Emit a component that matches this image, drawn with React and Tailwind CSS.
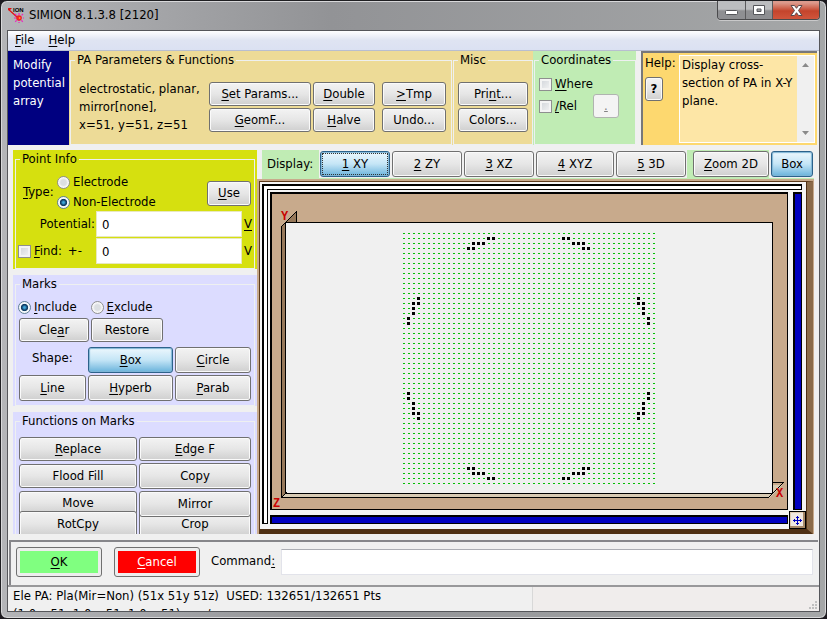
import React from "react";

/* Renders a label in which the character after "_" is the underlined access key. */
function Accel({ text }) {
  const i = text.indexOf("_");
  if (i < 0) return <>{text}</>;
  return (
    <>
      {text.slice(0, i)}
      <span className="underline underline-offset-2">{text[i + 1]}</span>
      {text.slice(i + 2)}
    </>
  );
}

function Btn({ label, className = "h-6", active = false, focus = false }) {
  const look = active
    ? "border-[#2c628b] bg-linear-to-b from-[#e5f4fc] from-10% via-[#c4e5f6] via-50% to-[#68b3db] shadow-[inset_0_0_1px_1px_#7fb5d5]"
    : "border-[#707070] bg-linear-to-b from-[#f3f3f3] via-[#e6e6e6] to-[#cfcfcf] shadow-[inset_0_0_0_1px_#fafafa]";
  return (
    <button
      type="button"
      className={`relative flex shrink-0 items-center justify-center whitespace-nowrap rounded-[3px] border leading-4 ${look} ${className}`}
    >
      {focus && <span className="absolute inset-px border border-dotted border-[#333]" />}
      <span>
        <Accel text={label} />
      </span>
    </button>
  );
}

function Group({ title, className = "", children }) {
  return (
    <fieldset className={`min-w-0 border border-[#eef0f0] px-px ${className}`}>
      <legend className="ml-[3px] px-[2px] leading-[18px]">{title}</legend>
      {children}
    </fieldset>
  );
}

function Check({ id, label }) {
  return (
    <div className="flex items-center gap-[3px]">
      <input
        id={id}
        type="checkbox"
        className="size-[13px] shrink-0 appearance-none border border-[#8e8f8f] bg-linear-to-br from-[#cfd3d8] to-[#f6f6f6] shadow-[inset_0_0_0_2px_#f4f4f4]"
      />
      <label htmlFor={id} className="leading-[18px]">
        <Accel text={label} />
      </label>
    </div>
  );
}

function Radio({ id, name, label, checked = false }) {
  return (
    <div className="flex items-center gap-[3px]">
      <input
        id={id}
        name={name}
        type="radio"
        defaultChecked={checked}
        className="size-[13px] shrink-0 appearance-none rounded-full border border-[#8e8f8f] bg-[radial-gradient(circle,#dcdfe2_0_35%,#f8f8f8_60%)] checked:border-[#5f7f95] checked:bg-[radial-gradient(circle_at_50%_50%,#3fa9dc_0_10%,#123f66_34%,#123f66_42%,#f4f8fa_52%)]"
      />
      <label htmlFor={id} className="leading-[18px]">
        <Accel text={label} />
      </label>
    </div>
  );
}

function TitleBar() {
  return (
    <header className="flex h-[29px] items-start justify-between">
      <div className="flex items-center gap-[5px] pl-px pt-[5px]">
        <svg width="16" height="18" viewBox="0 0 16 18" aria-hidden="true">
          <path d="M0 3 L9 11" stroke="#e01010" strokeWidth="1.3" />
          <path d="M0 2h4l-3 3z" fill="#e01010" />
          <text x="5" y="6" fontSize="6" fontWeight="bold" fontFamily="Liberation Sans, sans-serif">ION</text>
          <g stroke="#f020c0" strokeWidth="1.2">
            <path d="M11 7v10M6 12h10M7 8l8 8M15 8l-8 8" strokeDasharray="2 1" />
          </g>
          <circle cx="11" cy="12" r="2.8" fill="#f02020" />
          <circle cx="11.6" cy="12" r="1" fill="#ff9a20" />
        </svg>
        <h1 className="text-[13px] leading-[18px] text-black">SIMION 8.1.3.8 [2120]</h1>
      </div>
      <div className="flex h-[19px] overflow-hidden rounded-b-[4px] border border-t-0 border-[#4a4a4c] text-white shadow-[0_1px_0_#c9c9ca]">
        <button type="button" aria-label="Minimize" className="flex w-7 items-center justify-center border-r border-[#5a5a5c] bg-linear-to-b from-[#bcbdbf] from-45% to-[#8e8f92] to-55% pt-1">
          <svg width="13" height="5"><rect x=".5" y=".5" width="12" height="4" rx="1" fill="#fff" stroke="#55565a" /></svg>
        </button>
        <button type="button" aria-label="Maximize" className="flex w-[27px] items-center justify-center border-r border-[#5a5a5c] bg-linear-to-b from-[#bcbdbf] from-45% to-[#8e8f92] to-55%">
          <svg width="12" height="10"><path d="M.5 .5h11v9h-11zM4 4v2.500h4v-2.500z" fill="#fff" fillRule="evenodd" stroke="#55565a" /></svg>
        </button>
        <button type="button" aria-label="Close" className="flex w-[46px] items-center justify-center bg-linear-to-b from-[#dc9a8c] from-10% via-[#c4442c] via-55% to-[#d0553c]">
          <svg width="13" height="11"><path d="M1 .5h3.500l2 2.800 2-2.800H12L8.500 5.500 12 10.500H8.500l-2-2.800-2 2.800H1l3.500-5z" fill="#fff" stroke="#5a4a4c" /></svg>
        </button>
      </div>
    </header>
  );
}

function Toolbar() {
  return (
    <section className="flex h-[94px]">
      <div className="w-[61px] shrink-0 bg-[#000080] pl-[5px] pt-[5px] leading-[18px] text-white">Modify potential array</div>
      <div className="flex shrink-0 gap-px bg-[#eddb97] pl-px">
        <Group title="PA Parameters & Functions" className="w-[382px]">
          <div className="flex pl-[7px] pt-[11px]">
            <p className="w-[130px] whitespace-nowrap leading-[18px]">
              electrostatic, planar,
              <br />
              mirror[none],
              <br />
              x=51, y=51, z=51
            </p>
            <div className="grid grid-cols-[102px_62px_69px] content-start gap-x-[2px] gap-y-[2px] pt-[2px]">
              <Btn label="_Set Params..." />
              <Btn label="_Double" />
              <Btn label="_>Tmp" className="ml-[5px] h-6" />
              <Btn label="_GeomF..." />
              <Btn label="_Halve" />
              <Btn label="Undo..." className="ml-[5px] h-6" />
            </div>
          </div>
        </Group>
        <Group title="Misc" className="w-[80px]">
          <div className="flex flex-col gap-[2px] px-[3px] pt-[13px]">
            <Btn label="Pri_nt..." />
            <Btn label="Colors..." />
          </div>
        </Group>
      </div>
      <div className="w-[103px] shrink-0 bg-[#c0ecb4] pl-px">
        <Group title="Coordinates" className="h-full">
          <div className="flex flex-col gap-px pl-[3px] pt-[6px]">
            <Check id="where" label="_Where" />
            <div className="flex items-center gap-4">
              <Check id="rel" label="_/Rel" />
              <button type="button" className="h-6 w-[26px] rounded-[3px] border border-[#b0b4b0] bg-[#f4f4f4] leading-4 text-[#838383] underline">.</button>
            </div>
          </div>
        </Group>
      </div>
      <div className="ml-[5px] mr-[2px] flex min-w-0 flex-1 border-l-2 border-t-2 border-[#77777a] bg-[#fdd86f] pl-[2px]">
        <div className="w-[34px] shrink-0 pt-px">
          <label htmlFor="help" className="whitespace-nowrap leading-[18px]">Help:</label>
          <Btn label="?" className="mt-[5px] h-6 w-[18px] font-bold" />
        </div>
        <div className="my-[2px] mr-[2px] flex min-w-0 flex-1 border border-white bg-[#fde6a6]">
          <textarea id="help" readOnly defaultValue="Display cross-section of PA in X-Y plane." className="min-w-0 flex-1 resize-none overflow-hidden pl-[2px] leading-[18px] outline-none" />
          <div className="flex w-[17px] shrink-0 flex-col items-center justify-between bg-[#f0f0f0] py-[7px]">
            <svg width="7" height="4"><path d="M0 4 3.500 0 7 4z" fill="#8a8a8a" /></svg>
            <svg width="7" height="4"><path d="M0 0 3.500 4 7 0z" fill="#8a8a8a" /></svg>
          </div>
        </div>
      </div>
    </section>
  );
}

function PointInfo() {
  return (
    <section className="bg-[#d6e00f] px-[2px]">
      <Group title="Point Info" className="h-[119px]">
        <div className="flex items-center pl-[6px] pt-[5px]">
          <span className="w-[34px] leading-[18px]"><Accel text="_Type:" /></span>
          <div className="flex flex-1 flex-col gap-[2px]">
            <Radio id="electrode" name="ptype" label="Electrode" />
            <Radio id="nonelectrode" name="ptype" label="Non-Electrode" checked />
          </div>
          <Btn label="_Use" className="mr-[2px] mt-[2px] h-[25px] w-11" />
        </div>
        <div className="grid grid-cols-[79px_146px_1fr] items-center gap-y-px">
          <label htmlFor="potential" className="pr-px text-right leading-[18px]">Potential:</label>
          <input id="potential" defaultValue="0" className="h-[26px] min-w-0 border border-[#e8e8c0] bg-white px-[5px]" />
          <span className="pl-[2px] underline underline-offset-2">V</span>
          <div className="flex gap-[6px] pl-px">
            <Check id="find" label="_Find:" />
            <label htmlFor="tolerance">+-</label>
          </div>
          <input id="tolerance" defaultValue="0" className="h-[26px] min-w-0 border border-[#e8e8c0] bg-white px-[5px]" />
          <span className="pl-[2px]">V</span>
        </div>
      </Group>
    </section>
  );
}

function Marks() {
  return (
    <section className="bg-[#dcdcff] px-[2px]">
      <Group title="Marks" className="h-[131px]">
        <div className="flex gap-[14px] pl-px pt-[5px]">
          <Radio id="include" name="marks" label="_Include" checked />
          <Radio id="exclude" name="marks" label="_Exclude" />
        </div>
        <div className="flex gap-[2px] pl-[2px] pt-[2px]">
          <Btn label="Cle_ar" className="h-6 w-[70px]" />
          <Btn label="Restore" className="h-6 w-[72px]" />
        </div>
        <div className="grid grid-cols-[67px_85px_76px] gap-[2px] pl-[2px] pt-[5px]">
          <span className="pl-[13px] leading-[22px]">Shape:</span>
          <Btn label="_Box" className="h-[26px]" active />
          <Btn label="_Circle" className="h-[26px]" />
          <Btn label="_Line" className="h-[26px]" />
          <Btn label="_Hyperb" className="h-[26px]" />
          <Btn label="_Parab" className="h-[26px]" />
        </div>
      </Group>
    </section>
  );
}

function MarkFunctions() {
  return (
    <section className="h-[122px] overflow-hidden bg-[#dcdcff] px-[2px]">
      <Group title="Functions on Marks" className="h-[140px]">
        <div className="grid grid-cols-[118px_112px] gap-[2px] pl-[2px] pt-[7px]">
          <div className="flex flex-col gap-[3px]">
            <Btn label="_Replace" />
            <Btn label="Flood Fill" />
            <Btn label="Move" />
            <Btn label="RotCpy" className="-mt-[7px] h-[26px]" />
          </div>
          <div className="flex flex-col gap-[2px]">
            <Btn label="_Edge F" />
            <Btn label="Copy" className="h-[26px]" />
            <Btn label="Mirror" className="z-10 h-[26px]" />
            <Btn label="Crop" className="-mt-[8px] h-[26px]" />
          </div>
        </div>
      </Group>
    </section>
  );
}

function DisplayBar() {
  return (
    <div className="ml-[5px] flex h-[29px] shrink-0 border-b border-[#c0ecb4]">
      <span className="w-[57px] shrink-0 bg-[#c0ecb4] pl-[5px] leading-7">Display:</span>
      <div className="flex min-w-0 flex-1 gap-[2px] pl-px pt-px">
        <Btn label="_1 XY" className="h-[26px] w-[70px]" active focus />
        <Btn label="_2 ZY" className="h-[26px] w-[70px]" />
        <Btn label="_3 XZ" className="h-[26px] w-[70px]" />
        <Btn label="_4 XYZ" className="h-[26px] w-[78px]" />
        <Btn label="_5 3D" className="h-[26px] w-[70px]" />
      </div>
      <div className="flex shrink-0 bg-[#c0ecb4] pl-[6px] pt-px">
        <Btn label="_Zoom 2D" className="h-[26px] w-[76px]" />
      </div>
      <div className="pl-[2px] pr-px pt-px">
        <Btn label="Box" className="h-[26px] w-[42px]" active />
      </div>
    </div>
  );
}

/* One octant of electrode points on the 51 x 51 array; the rest follows by mirroring. */
const TOP = [[13, 3], [14, 3], [14, 2], [15, 2], [16, 2], [17, 1], [18, 1]];
const SIDE = [[3, 13], [3, 14], [2, 14], [2, 15], [2, 16], [1, 17], [1, 18]];
const POINTS = [...TOP, ...SIDE].flatMap(([i, j]) => [[i, j], [50 - i, j], [i, 50 - j], [50 - i, 50 - j]]);
const ROWS = Array.from({ length: 51 }, (_, r) => r);

function Plot() {
  return (
    <svg viewBox="272 194 515 315" className="block h-full w-full bg-[#c8aa8c]" role="img" aria-label="XY cross-section of the potential array">
      <g shapeRendering="crispEdges">
        <path d="M281 226 296 211V223H286V494L281 498Z" fill="#96785a" />
        <path d="M286 494H773V485H783L769 498H281Z" fill="#d8cbb4" />
        <rect x="286" y="223" width="486" height="270" fill="#f0f0f0" />
        <path d="M285.500 222.500H772.500V493.500H285.500ZM281.500 226V497.500H768.500M296.500 211V222M772 482.500H783" fill="none" stroke="#000" />
        <path d="M281.500 226.500 296.500 211.500M281.500 497.500 286.500 492.500M768.500 497.500 783.500 482.500" stroke="#000" />
        {ROWS.map((r) => (
          <path key={r} d={`M403 ${233.5 + 5 * r}H655`} stroke="#00c000" strokeDasharray="2 3" />
        ))}
        {POINTS.map(([i, j]) => (
          <rect key={`${i}-${j}`} x={402 + 5 * i} y={232 + 5 * j} width="3" height="3" />
        ))}
      </g>
      <g fill="#c80000" fontWeight="bold" fontSize="12" fontFamily="Liberation Mono, monospace">
        <text x="281" y="220">Y</text>
        <text x="776" y="497">X</text>
        <text x="273" y="507">Z</text>
      </g>
    </svg>
  );
}

function Canvas() {
  return (
    <div className="flex min-h-0 flex-1 bg-[#c8aa8c] pl-[2px] pr-px pt-[2px]">
      <div className="relative flex min-w-0 flex-1 border-b-[5px] border-l border-r-[6px] border-t border-b-[#4f3014] border-l-[#5c3a1c] border-r-[#8b6b4a] border-t-[#5c3a1c] bg-[#f4f4f4] pb-[5px] pl-[2px] pr-[5px] pt-[2px] shadow-[inset_-1px_0_0_#4f3014]">
        <div className="grid min-w-0 flex-1 grid-cols-[6px_minmax(0,1fr)_9px] grid-rows-[6px_minmax(0,1fr)_9px]">
          <div className="col-span-3 border-b border-l-2 border-r border-t-2 border-black bg-white" />
          <div className="row-span-2 -mt-px border-b border-l-2 border-r border-black bg-white" />
          <div className="mb-[5px] ml-[2px] mr-[5px] mt-[2px] border-b border-l-2 border-r border-t-2 border-black">
            <Plot />
          </div>
          <div className="mb-[5px] mt-[2px] border-b border-l-2 border-r border-t-2 border-black bg-[#0000c0]" />
          <div className="ml-[2px] mr-[5px] border-b border-l-2 border-r border-t-2 border-black bg-[#0000c0]" />
        </div>
        <button type="button" aria-label="Pan" className="absolute bottom-0 right-[1px] flex h-[18px] w-[17px] items-center justify-center border border-black bg-[#f0e8e0] shadow-[inset_-2px_-2px_0_#a88a6a,inset_1px_1px_0_#e0ccb0]">
          <svg width="11" height="11" shapeRendering="crispEdges" aria-hidden="true">
            <path d="M5 1h1v9h-1zM1 5h9v1h-9zM4 2h3v1h-3zM4 8h3v1h-3zM2 4h1v3h-1zM8 4h1v3h-1z" fill="#0000c0" />
          </svg>
        </button>
      </div>
    </div>
  );
}

function CommandBar() {
  return (
    <section className="mx-px flex h-[45px] items-start border-l-2 border-t-2 border-[#86868a] bg-[#f0f0f0] pl-[5px] pr-[5px] pt-[5px]">
      <button type="button" className="h-[30px] w-[86px] shrink-0 rounded-[3px] border border-[#707070] bg-[#ededed] p-[3px]">
        <span className="flex h-full items-center justify-center bg-[#80ff80]"><span><Accel text="_OK" /></span></span>
      </button>
      <button type="button" className="ml-3 h-[30px] w-[86px] shrink-0 rounded-[3px] border border-[#707070] bg-[#ededed] p-[3px]">
        <span className="flex h-full items-center justify-center bg-[#ff0000] text-white"><span><Accel text="_Cancel" /></span></span>
      </button>
      <label htmlFor="command" className="ml-[11px] w-[70px] shrink-0 leading-[27px]"><Accel text="Command_:" /></label>
      <input id="command" className="mt-[2px] h-[26px] min-w-0 flex-1 border border-[#e2e3ea] border-t-[#abadb3] bg-white px-1 outline-none" />
    </section>
  );
}

function StatusBar() {
  return (
    <footer className="flex h-[26px] border-t-2 border-[#98989a] bg-[#f0f0f0]">
      <p className="w-[525px] shrink-0 overflow-hidden whitespace-pre border-r border-[#d8d8d8] pl-[5px] leading-[18px]">
        {"Ele PA: Pla(Mir=Non) (51x 51y 51z)  USED: 132651/132651 Pts\n(1.0 x 51, 1.0 x 51, 1.0 x 51)   gu/"}
      </p>
      <div className="flex flex-1 items-end justify-end bg-[#f0edec] p-px">
        <svg width="10" height="10" aria-hidden="true">
          <path d="M7 1h2v2h-2zM4 4h2v2h-2zM7 4h2v2h-2zM1 7h2v2h-2zM4 7h2v2h-2zM7 7h2v2h-2z" fill="#bfbfbf" />
        </svg>
      </div>
    </footer>
  );
}

export default function App() {
  return (
    <div className="min-h-screen bg-[#1d1a20] font-['DejaVu_Sans_Condensed','DejaVu_Sans',sans-serif] text-[13px] leading-[18px] text-black [font-stretch:condensed]">
      <div className="flex min-h-screen flex-col rounded-[7px] border border-[#1f1f22] bg-linear-to-r from-[#b4b5b8] via-[#929396] via-40% to-[#a5a7a8] px-[6px] pb-[6px] shadow-[inset_0_0_0_1px_#d8d8da]">
        <TitleBar />
        <main className="flex flex-1 flex-col border border-[#55565a] bg-[#f0f0f0]">
          <nav className="flex h-5 shrink-0 gap-[14px] border-b border-[#b8bed0] bg-linear-to-b from-white via-[#dfe4f2] to-[#dbe1f2] pl-[7px]">
            <button type="button" className="h-[18px]"><Accel text="_File" /></button>
            <button type="button" className="h-[18px]"><Accel text="_Help" /></button>
          </nav>
          <Toolbar />
          <div className="flex pb-[6px] pl-[5px] pr-[5px] pt-[5px]">
            <div className="flex w-[244px] shrink-0 flex-col gap-[6px]">
              <PointInfo />
              <Marks />
              <MarkFunctions />
            </div>
            <div className="flex min-w-0 flex-1 flex-col">
              <DisplayBar />
              <Canvas />
            </div>
          </div>
          <CommandBar />
          <StatusBar />
        </main>
      </div>
    </div>
  );
}
